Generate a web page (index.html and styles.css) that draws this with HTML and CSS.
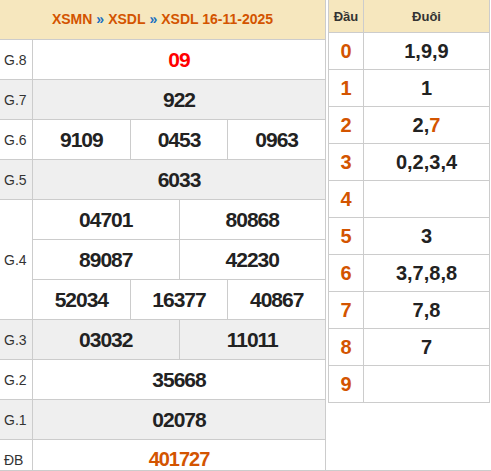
FILE: index.html
```html
<!DOCTYPE html>
<html lang="vi">
<head>
<meta charset="utf-8">
<title>XSDL 16-11-2025</title>
<link rel="stylesheet" href="styles.css">
</head>
<body>
<div class="page">
  <div class="kq">
    <div class="kq-head">
      <span class="crumb">XSMN</span> <span class="sep">»</span> <span class="crumb">XSDL</span> <span class="sep">»</span> <span class="crumb">XSDL 16-11-2025</span>
    </div>
    <div class="row">
      <div class="label">G.8</div>
      <div class="vals"><div class="v g8">09</div></div>
    </div>
    <div class="row alt">
      <div class="label">G.7</div>
      <div class="vals"><div class="v">922</div></div>
    </div>
    <div class="row">
      <div class="label">G.6</div>
      <div class="vals"><div class="v">9109</div><div class="v">0453</div><div class="v">0963</div></div>
    </div>
    <div class="row alt">
      <div class="label">G.5</div>
      <div class="vals"><div class="v">6033</div></div>
    </div>
    <div class="row tall">
      <div class="label">G.4</div>
      <div class="stack">
        <div class="vals sub"><div class="v">04701</div><div class="v">80868</div></div>
        <div class="vals sub"><div class="v">89087</div><div class="v">42230</div></div>
        <div class="vals"><div class="v">52034</div><div class="v">16377</div><div class="v">40867</div></div>
      </div>
    </div>
    <div class="row alt">
      <div class="label">G.3</div>
      <div class="vals"><div class="v">03032</div><div class="v">11011</div></div>
    </div>
    <div class="row">
      <div class="label">G.2</div>
      <div class="vals"><div class="v">35668</div></div>
    </div>
    <div class="row alt">
      <div class="label">G.1</div>
      <div class="vals"><div class="v">02078</div></div>
    </div>
    <div class="row">
      <div class="label">ĐB</div>
      <div class="vals"><div class="v db">401727</div></div>
    </div>
  </div>

  <div class="loto">
    <div class="lrow lhead"><div class="dau">Đầu</div><div class="duoi">Đuôi</div></div>
    <div class="lrow"><div class="dau">0</div><div class="duoi">1,9,9</div></div>
    <div class="lrow"><div class="dau">1</div><div class="duoi">1</div></div>
    <div class="lrow"><div class="dau">2</div><div class="duoi">2,<span class="hl">7</span></div></div>
    <div class="lrow"><div class="dau">3</div><div class="duoi">0,2,3,4</div></div>
    <div class="lrow"><div class="dau">4</div><div class="duoi"></div></div>
    <div class="lrow"><div class="dau">5</div><div class="duoi">3</div></div>
    <div class="lrow"><div class="dau">6</div><div class="duoi">3,7,8,8</div></div>
    <div class="lrow"><div class="dau">7</div><div class="duoi">7,8</div></div>
    <div class="lrow"><div class="dau">8</div><div class="duoi">7</div></div>
    <div class="lrow"><div class="dau">9</div><div class="duoi"></div></div>
  </div>
</div>
</body>
</html>
```

FILE: styles.css
```css
html, body {
  margin: 0;
  padding: 0;
  background: #fff;
}

body {
  font-family: "Liberation Sans", Arial, sans-serif;
  color: #222;
}

.page {
  height: 471px;
  overflow: hidden;
  box-sizing: border-box;
  border-bottom: 1px solid #ccc;
  display: flex;
  align-items: flex-start;
}

/* ---------- Result table ---------- */
.kq {
  width: 326px;
  flex: none;
  box-sizing: border-box;
  border-right: 1px solid #ccc;
}

.kq-head {
  height: 40px;
  box-sizing: border-box;
  border-bottom: 1px solid #ccc;
  background: #f6e7be;
  display: flex;
  align-items: center;
  justify-content: center;
  gap: 4px;
  font-size: 14px;
  font-weight: bold;
  padding-bottom: 2px;
  white-space: pre;
}

.crumb {
  color: #d35400;
}

.sep {
  color: #1a6fc0;
}

.row {
  display: flex;
  height: 40px;
  box-sizing: border-box;
  border-bottom: 1px solid #ccc;
  background: #fff;
}

.row.alt {
  background: #efefef;
}

.row.tall {
  height: 120px;
}

.label {
  width: 33px;
  flex: none;
  box-sizing: border-box;
  border-right: 1px solid #ccc;
  padding-left: 4px;
  display: flex;
  align-items: center;
  font-size: 14px;
  color: #333;
}

.stack {
  flex: 1;
  display: flex;
  flex-direction: column;
}

.stack .vals {
  height: 40px;
  flex: none;
}

.stack .vals:last-child {
  height: 39px;
}

.vals.sub {
  box-sizing: border-box;
  border-bottom: 1px solid #ccc;
}

.vals {
  flex: 1;
  display: flex;
}

.v {
  flex: 1;
  display: flex;
  align-items: center;
  justify-content: center;
  font-size: 21px;
  font-weight: bold;
  letter-spacing: -1px;
  color: #222;
}

.v + .v {
  border-left: 1px solid #ccc;
}

.v.g8 {
  color: #f00;
}

.v.db {
  color: #d35400;
  font-size: 20px;
}

/* ---------- Loto table ---------- */
.loto {
  margin-left: 2px;
  width: 162px;
  flex: none;
  box-sizing: border-box;
  border-left: 1px solid #ccc;
  border-right: 1px solid #ccc;
}

.lrow {
  display: flex;
  height: 37px;
  box-sizing: border-box;
  border-bottom: 1px solid #ccc;
}

.lrow.lhead {
  height: 33px;
  background: #f6e7be;
}

.dau {
  width: 35px;
  flex: none;
  box-sizing: border-box;
  border-right: 1px solid #ccc;
  display: flex;
  align-items: center;
  justify-content: center;
  font-size: 20px;
  font-weight: bold;
  color: #d35400;
}

.duoi {
  flex: 1;
  display: flex;
  align-items: center;
  justify-content: center;
  font-size: 20px;
  font-weight: bold;
  color: #222;
}

.lhead .dau,
.lhead .duoi {
  font-size: 13px;
  color: #333;
}

.hl {
  color: #d35400;
}
```
